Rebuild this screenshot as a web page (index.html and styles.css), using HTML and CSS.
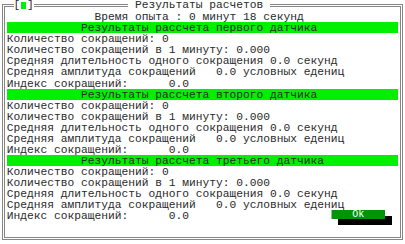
FILE: index.html
```html
<!DOCTYPE html>
<html lang="ru">
<head>
<meta charset="utf-8">
<title>Результаты расчетов</title>
<link rel="stylesheet" href="styles.css">
</head>
<body>
<div class="dialog">
  <div class="frame"></div>
  <div class="titlebar">
    <span class="close">[<i class="sq"></i>]</span>
    <span class="title"> Результаты расчетов </span>
  </div>
  <div class="body">
    <div class="row">             Время опыта : 0 минут 18 секунд</div>
    <div class="row bar">           Результаты рассчета первого датчика</div>
    <div class="row">Количество сокращений: 0</div>
    <div class="row">Количество сокращений в 1 минуту: 0.000</div>
    <div class="row">Средняя длительность одного сокращения 0.0 секунд</div>
    <div class="row">Средняя амплитуда сокращений   0.0 условных едениц</div>
    <div class="row">Индекс сокращений:      0.0</div>
    <div class="row bar">           Результаты рассчета второго датчика</div>
    <div class="row">Количество сокращений: 0</div>
    <div class="row">Количество сокращений в 1 минуту: 0.000</div>
    <div class="row">Средняя длительность одного сокращения 0.0 секунд</div>
    <div class="row">Средняя амплитуда сокращений   0.0 условных едениц</div>
    <div class="row">Индекс сокращений:      0.0</div>
    <div class="row bar">           Результаты рассчета третьего датчика</div>
    <div class="row">Количество сокращений: 0</div>
    <div class="row">Количество сокращений в 1 минуту: 0.000</div>
    <div class="row">Средняя длительность одного сокращения 0.0 секунд</div>
    <div class="row">Средняя амплитуда сокращений   0.0 условных едениц</div>
    <div class="row last"><span>Индекс сокращений:      0.0</span><button class="ok" type="button">Ok</button></div>
    <div class="row"></div>
  </div>
</div>
</body>
</html>
```
FILE: styles.css
```css
* { box-sizing: border-box; }
html, body { margin: 0; padding: 0; background: #fff; }
.dialog {
  position: relative;
  width: 405px;
  height: 244px;
  background: #fff;
  font-family: "Liberation Mono", "DejaVu Sans Mono", monospace;
  font-size: 11.25px;
  color: #2a2a2a;
  overflow: hidden;
}
.frame {
  position: absolute;
  left: 2px;
  right: 2px;
  top: 4px;
  bottom: 4px;
  border: 3px double #858585;
}
.titlebar {
  position: relative;
  display: flex;
  height: 11.09px;
  line-height: 11.09px;
  padding-left: 13.5px;
  white-space: pre;
}
.close, .title { background: #fff; }
.close {
  display: flex;
  align-items: center;
  width: 20.25px;
}
.sq {
  display: inline-block;
  width: 6px;
  height: 7px;
  margin: 0 0.5px;
  background: #00f000;
}
.title { margin-left: 94.5px; }
.body {
  position: relative;
  padding: 0 6.75px;
}
.row {
  height: 11.09px;
  line-height: 12.6px;
  white-space: pre;
}
.bar { background: #00f000; }
.last {
  display: flex;
  justify-content: space-between;
  align-items: flex-start;
}
.ok {
  width: 54px;
  height: 9px;
  margin: 0 13.5px 0 0;
  padding: 0;
  border: 0;
  border-left: 1px solid #7fd07f;
  background: #00940a;
  color: #fff;
  font: inherit;
  font-size: 10px;
  line-height: 9px;
  box-shadow: 7px 6px 0 #000;
}
```
